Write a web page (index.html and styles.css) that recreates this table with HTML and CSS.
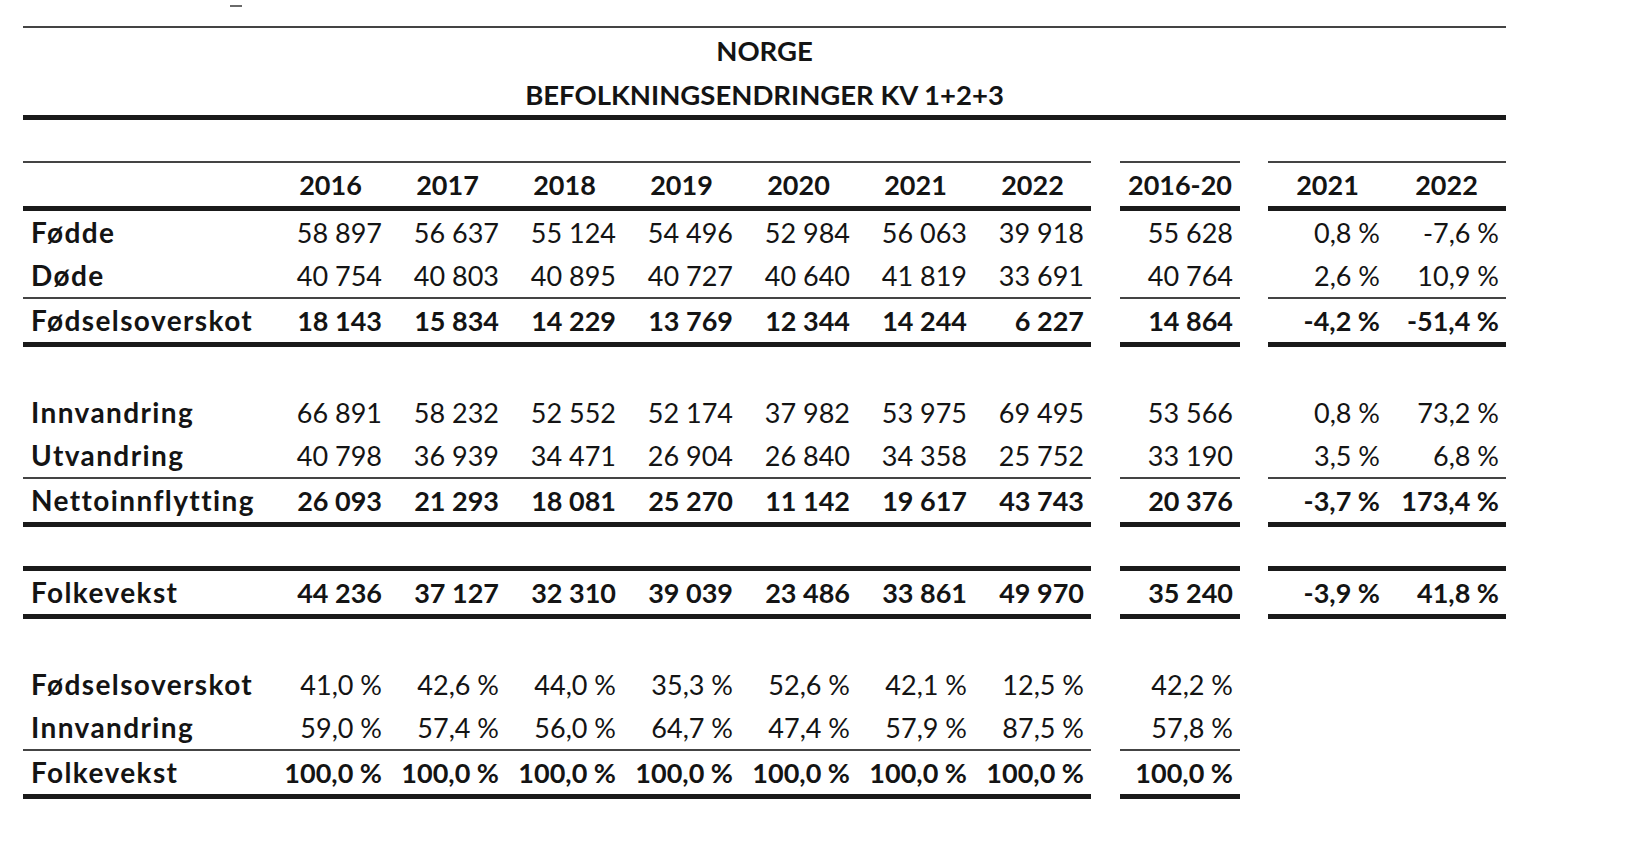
FILE: index.html
```html
<!DOCTYPE html>
<html lang="no">
<head>
    <meta charset="UTF-8">
    <title>Norge - befolkningsendringer</title>
    <link rel="stylesheet" href="styles.css">
</head>
<body>
    <div class="sheet">
        <div class="scan-mark"></div>

        <div class="title-block">
            <h1>NORGE</h1>
            <h2>BEFOLKNINGSENDRINGER KV 1+2+3</h2>
        </div>

        <table class="stats">
            <colgroup>
                <col class="c-label">
                <col class="c-year"><col class="c-year"><col class="c-year"><col class="c-year">
                <col class="c-year"><col class="c-year"><col class="c-year">
                <col class="c-gap1">
                <col class="c-avg">
                <col class="c-gap2">
                <col class="c-pct"><col class="c-pct">
            </colgroup>
            <thead>
                <tr class="head">
                    <th></th>
                    <th>2016</th><th>2017</th><th>2018</th><th>2019</th><th>2020</th><th>2021</th><th>2022</th>
                    <th class="sp"></th>
                    <th>2016-20</th>
                    <th class="sp"></th>
                    <th>2021</th><th>2022</th>
                </tr>
            </thead>
            <tbody>
                <tr>
                    <td class="label">Fødde</td>
                    <td>58 897</td><td>56 637</td><td>55 124</td><td>54 496</td><td>52 984</td><td>56 063</td><td>39 918</td>
                    <td class="sp"></td><td>55 628</td><td class="sp"></td>
                    <td>0,8 %</td><td>-7,6 %</td>
                </tr>
                <tr class="sub">
                    <td class="label">Døde</td>
                    <td>40 754</td><td>40 803</td><td>40 895</td><td>40 727</td><td>40 640</td><td>41 819</td><td>33 691</td>
                    <td class="sp"></td><td>40 764</td><td class="sp"></td>
                    <td>2,6 %</td><td>10,9 %</td>
                </tr>
                <tr class="sum">
                    <td class="label">Fødselsoverskot</td>
                    <td>18 143</td><td>15 834</td><td>14 229</td><td>13 769</td><td>12 344</td><td>14 244</td><td>6 227</td>
                    <td class="sp"></td><td>14 864</td><td class="sp"></td>
                    <td>-4,2 %</td><td>-51,4 %</td>
                </tr>

                <tr class="gap gap-a"><td colspan="13"></td></tr>

                <tr>
                    <td class="label">Innvandring</td>
                    <td>66 891</td><td>58 232</td><td>52 552</td><td>52 174</td><td>37 982</td><td>53 975</td><td>69 495</td>
                    <td class="sp"></td><td>53 566</td><td class="sp"></td>
                    <td>0,8 %</td><td>73,2 %</td>
                </tr>
                <tr class="sub">
                    <td class="label">Utvandring</td>
                    <td>40 798</td><td>36 939</td><td>34 471</td><td>26 904</td><td>26 840</td><td>34 358</td><td>25 752</td>
                    <td class="sp"></td><td>33 190</td><td class="sp"></td>
                    <td>3,5 %</td><td>6,8 %</td>
                </tr>
                <tr class="sum">
                    <td class="label">Nettoinnflytting</td>
                    <td>26 093</td><td>21 293</td><td>18 081</td><td>25 270</td><td>11 142</td><td>19 617</td><td>43 743</td>
                    <td class="sp"></td><td>20 376</td><td class="sp"></td>
                    <td>-3,7 %</td><td>173,4 %</td>
                </tr>

                <tr class="gap gap-b"><td colspan="13"></td></tr>

                <tr class="sum boxed">
                    <td class="label">Folkevekst</td>
                    <td>44 236</td><td>37 127</td><td>32 310</td><td>39 039</td><td>23 486</td><td>33 861</td><td>49 970</td>
                    <td class="sp"></td><td>35 240</td><td class="sp"></td>
                    <td>-3,9 %</td><td>41,8 %</td>
                </tr>

                <tr class="gap gap-c"><td colspan="13"></td></tr>

                <tr>
                    <td class="label">Fødselsoverskot</td>
                    <td>41,0 %</td><td>42,6 %</td><td>44,0 %</td><td>35,3 %</td><td>52,6 %</td><td>42,1 %</td><td>12,5 %</td>
                    <td class="sp"></td><td>42,2 %</td><td class="sp"></td>
                    <td class="sp"></td><td class="sp"></td>
                </tr>
                <tr class="sub">
                    <td class="label">Innvandring</td>
                    <td>59,0 %</td><td>57,4 %</td><td>56,0 %</td><td>64,7 %</td><td>47,4 %</td><td>57,9 %</td><td>87,5 %</td>
                    <td class="sp"></td><td>57,8 %</td><td class="sp"></td>
                    <td class="sp"></td><td class="sp"></td>
                </tr>
                <tr class="sum">
                    <td class="label">Folkevekst</td>
                    <td>100,0 %</td><td>100,0 %</td><td>100,0 %</td><td>100,0 %</td><td>100,0 %</td><td>100,0 %</td><td>100,0 %</td>
                    <td class="sp"></td><td>100,0 %</td><td class="sp"></td>
                    <td class="sp"></td><td class="sp"></td>
                </tr>
            </tbody>
        </table>
    </div>
</body>
</html>
```

FILE: styles.css
```css
:root {
    --ink: #141414;
    --thin-rule: #444444;
    --thick-rule: #1a1a1a;
}

* {
    margin: 0;
    padding: 0;
    box-sizing: border-box;
}

body {
    font-family: Lato, "Open Sans", sans-serif;
    background: #ffffff;
    color: var(--ink);
}

.sheet {
    width: 1506px;
    padding-left: 23px;
}

/* leftover speck from the scan */
.scan-mark {
    width: 12px;
    height: 2px;
    margin: 5px 0 0 207px;
    background: #6a6a6a;
}

.title-block {
    margin-top: 19px;
    border-top: 2px solid var(--thin-rule);
    border-bottom: 5px solid var(--thick-rule);
    text-align: center;
    font-weight: 700;
}

.title-block h1,
.title-block h2 {
    font-size: 27.5px;
    font-weight: 700;
}

.title-block h1 { line-height: 46px; }
.title-block h2 { line-height: 41px; }

.stats {
    margin-top: 41px;
    width: 1483px;
    table-layout: fixed;
    border-collapse: separate;
    border-spacing: 0;
    font-size: 27px;
}

.c-label { width: 249px; }
.c-year { width: 117px; }
.c-gap1 { width: 29px; }
.c-avg { width: 120px; }
.c-gap2 { width: 28px; }
.c-pct { width: 119px; }

.stats th,
.stats td {
    line-height: 43px;
    padding: 0 7px;
    text-align: right;
    white-space: nowrap;
}

.stats th {
    text-align: center;
    font-weight: 700;
}

.head th {
    border-top: 2px solid var(--thin-rule);
    border-bottom: 5px solid var(--thick-rule);
}

.stats .label {
    text-align: left;
    padding-left: 8px;
    font-size: 28px;
    letter-spacing: 1.4px;
    font-weight: 700;
}

.sub td {
    border-bottom: 2px solid var(--thin-rule);
}

.sum td {
    font-weight: 700;
    border-bottom: 5px solid var(--thick-rule);
}

.boxed td {
    border-top: 5px solid var(--thick-rule);
}

.stats .sp,
.head .sp {
    border: none;
}

.gap td {
    line-height: 0;
    padding: 0;
}

.gap-a { height: 44px; }
.gap-b { height: 39px; }
.gap-c { height: 44px; }
```
